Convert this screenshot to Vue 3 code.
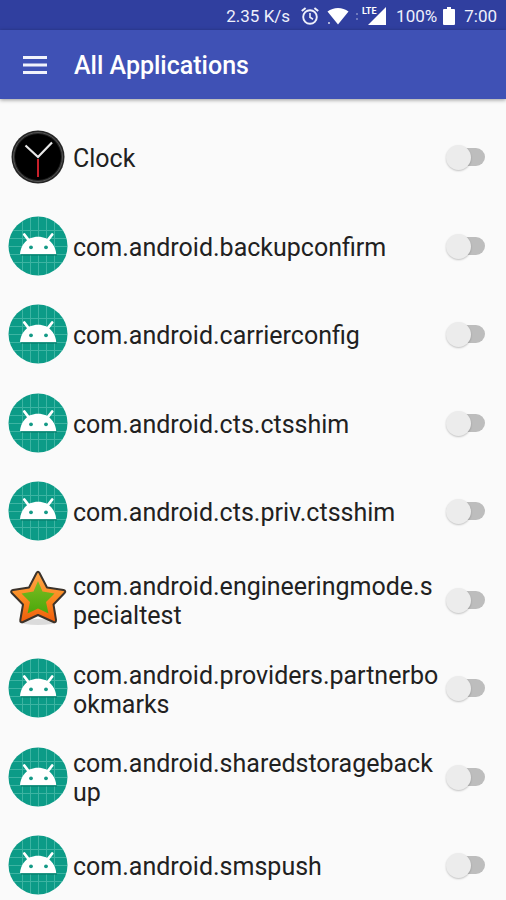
<script setup>
import { ref } from 'vue'

const apps = ref([
  { name: 'Clock', icon: 'clock', on: false },
  { name: 'com.android.backupconfirm', icon: 'android', on: false },
  { name: 'com.android.carrierconfig', icon: 'android', on: false },
  { name: 'com.android.cts.ctsshim', icon: 'android', on: false },
  { name: 'com.android.cts.priv.ctsshim', icon: 'android', on: false },
  { name: 'com.android.engineeringmode.specialtest', icon: 'star', on: false },
  { name: 'com.android.providers.partnerbookmarks', icon: 'android', on: false },
  { name: 'com.android.sharedstoragebackup', icon: 'android', on: false },
  { name: 'com.android.smspush', icon: 'android', on: false },
])
</script>

<template>
  <div class="screen">
    <div class="status">
      <span class="speed">2.35 K/s</span>
      <svg class="alarm" viewBox="0 0 20 20" width="20" height="20" fill="none" stroke="#eef0fb">
        <circle cx="10" cy="11" r="6.8" stroke-width="1.9" />
        <path d="M10 7v4.3l3 1.9" stroke-width="1.6" />
        <path d="M1.8 5 5.6 1.9M18.2 5l-3.8-3.1" stroke-width="2" />
      </svg>
      <svg class="wifi" viewBox="0 0 22 18" width="22" height="18" fill="#fff">
        <path d="M0.5 4.6C6.5-.2 15.500-.2 21.500 4.600L11 17.500z" />
        <path d="M1 15h2v2H1z" opacity=".6" />
      </svg>
      <svg class="signal" viewBox="0 0 32 20" width="32" height="20" fill="#fff">
        <path d="M1 7h2v2H1zM1 12h2v2H1z" opacity=".3" />
        <path d="M31 1v18H13z" />
        <path d="M7 0h16v9H7z" fill="#303f9f" />
        <text x="7" y="8" class="lte">LTE</text>
      </svg>
      <span class="percent">100%</span>
      <svg class="battery" viewBox="0 0 12 18" width="12" height="18" fill="#fff">
        <path d="M4 0h4v2h3a1 1 0 0 1 1 1v14a1 1 0 0 1-1 1H1a1 1 0 0 1-1-1V3a1 1 0 0 1 1-1h3z" />
      </svg>
      <span class="time">7:00</span>
    </div>

    <header class="bar">
      <button class="menu" type="button" aria-label="Open menu">
        <svg viewBox="0 0 24 18" width="24" height="18" fill="#f1f2fb">
          <path d="M0 0h24v3H0zM0 7.500h24v3H0zM0 15h24v3H0z" />
        </svg>
      </button>
      <h1>All Applications</h1>
    </header>

    <main class="content">
      <ul class="list">
        <li v-for="(app, i) in apps" :key="app.name" class="row">
          <svg v-if="app.icon === 'clock'" class="icon" viewBox="0 0 60 60">
            <circle cx="30" cy="30" r="26.500" fill="#252525" />
            <circle cx="30" cy="30" r="24.500" fill="none" stroke="#555" stroke-width="1" />
            <circle cx="30" cy="30" r="23" fill="#000" />
            <path d="M30 32v18" stroke="#c8202a" stroke-width="2" />
            <path d="M17.500 18.500 30 30 44 15.500" fill="none" stroke="#e8e8e8" stroke-width="2.200" />
          </svg>
          <svg v-else-if="app.icon === 'android'" class="icon" viewBox="0 0 60 60">
            <circle cx="30" cy="30" r="29.500" fill="#0c9b87" />
            <path
              d="M14.500 5v50M22.500 2v56M30.500 1v58M38.500 2v56M46.500 6v48M5 14.500h50M2 22.500h56M1 30.500h58M2 38.500h56M6 46.500h48"
              stroke="#5fc5b5" stroke-width="1" opacity=".6"
            />
            <path d="M13 38h36v2H13z" fill="#077565" opacity=".5" />
            <path d="M12 38C12.500 30.500 17 25 22 22.300c5-2.100 11-2.100 16 0 5 2.700 9.700 8.200 10.200 15.700z" fill="#fff" />
            <path d="m16.300 18.500 5 6.500M44.200 18.500l-5 6.500" stroke="#fff" stroke-width="2.800" stroke-linecap="round" />
            <circle cx="23" cy="31.300" r="1.900" fill="#159a87" />
            <circle cx="38" cy="31.300" r="1.900" fill="#159a87" />
          </svg>
          <svg v-else class="icon" viewBox="0 0 60 60">
            <defs>
              <linearGradient id="starEdge" x1="0" y1="0" x2="0" y2="1">
                <stop offset="0" stop-color="#ffa64a" />
                <stop offset=".5" stop-color="#fb8c22" />
                <stop offset="1" stop-color="#ef5c0c" />
              </linearGradient>
              <linearGradient id="starCore" x1="0" y1="0" x2="0" y2="1">
                <stop offset="0" stop-color="#7dbb22" />
                <stop offset="1" stop-color="#4aa80c" />
              </linearGradient>
            </defs>
            <ellipse cx="30" cy="52" rx="19" ry="3" fill="#000" opacity=".12" />
            <path
              d="M28.500 3Q30 .5 31.500 3L39 17.500 55.500 20Q58.500 21 56.500 23L45.500 34.500 48 50Q48 53 45.500 52L30 45 15 52Q12 53 12.300 50L15 34.500 3.800 23Q2 21 5 20L21 17.500z"
              fill="url(#starEdge)" stroke="#3c332b" stroke-width="2" stroke-linejoin="round"
            />
            <path d="m30 11 4.500 10.500 12 2-8.500 8.500 2.500 11.500-10.500-5-10.500 5 2.500-11.500-8.500-8.500 12-2z" fill="url(#starCore)" />
          </svg>
          <label class="name" :for="'app-' + i">{{ app.name }}</label>
          <input :id="'app-' + i" v-model="app.on" class="switch" type="checkbox" role="switch" />
        </li>
      </ul>
    </main>
  </div>
</template>

<style>
body {
  margin: 0;
  background: #fafafa;
}
</style>

<style scoped>
.screen {
  display: flex;
  flex-direction: column;
  height: 100vh;
  overflow: hidden;
  background: #fafafa;
  color: #212121;
  font-family: Roboto, "Liberation Sans", sans-serif;
}
.status {
  display: flex;
  flex: none;
  align-items: center;
  justify-content: flex-end;
  box-sizing: border-box;
  height: 30px;
  padding: 2px 9px 0 0;
  background: #303f9f;
  color: #eef0fb;
  font-size: 17px;
  line-height: 28px;
}
.status svg {
  flex: none;
}
.alarm {
  margin-left: 10px;
}
.wifi {
  margin-left: 7px;
}
.signal {
  margin-left: 6px;
}
.percent {
  margin-left: 9px;
}
.battery {
  margin-left: 6px;
}
.time {
  margin-left: 9px;
}
.lte {
  font-size: 9px;
  font-weight: 700;
}
.bar {
  position: relative;
  display: flex;
  flex: none;
  align-items: center;
  gap: 27px;
  box-sizing: border-box;
  height: 69px;
  padding: 2px 23px 0;
  background: #3f51b5;
  box-shadow: 0 1px 4px rgba(0, 0, 0, 0.4);
}
.menu {
  display: flex;
  padding: 0 0 2px;
  border: 0;
  background: none;
}
h1 {
  margin: 0;
  color: #fff;
  font-size: 25px;
  font-weight: 500;
  line-height: 32px;
}
.content {
  flex: 1;
  min-height: 0;
  overflow-y: auto;
  scrollbar-width: none;
}
.list {
  margin: 0;
  padding: 14px 20px 0 8px;
  list-style: none;
}
.row {
  display: flex;
  align-items: center;
  min-height: 88px;
}
.row:nth-child(even) {
  min-height: 89px;
}
.icon {
  flex: none;
  width: 60px;
  height: 60px;
}
.name {
  flex: 1;
  min-width: 0;
  margin: 3px 4px 0 5px;
  font-size: 25px;
  line-height: 29px;
  word-break: break-all;
}
.switch {
  position: relative;
  flex: none;
  width: 40px;
  height: 28px;
  margin: 0;
  appearance: none;
}
.switch::before {
  position: absolute;
  top: 5px;
  right: 1px;
  width: 32px;
  height: 18px;
  border-radius: 9px;
  background: #bdbdbd;
  content: "";
}
.switch::after {
  position: absolute;
  top: 2px;
  left: 0;
  width: 25px;
  height: 25px;
  border-radius: 50%;
  background: #ececec;
  box-shadow: 0 1px 2px rgba(0, 0, 0, 0.22);
  content: "";
}
.switch:checked::before {
  background: #ff80ab;
}
.switch:checked::after {
  left: 15px;
  background: #ff4081;
}
</style>
